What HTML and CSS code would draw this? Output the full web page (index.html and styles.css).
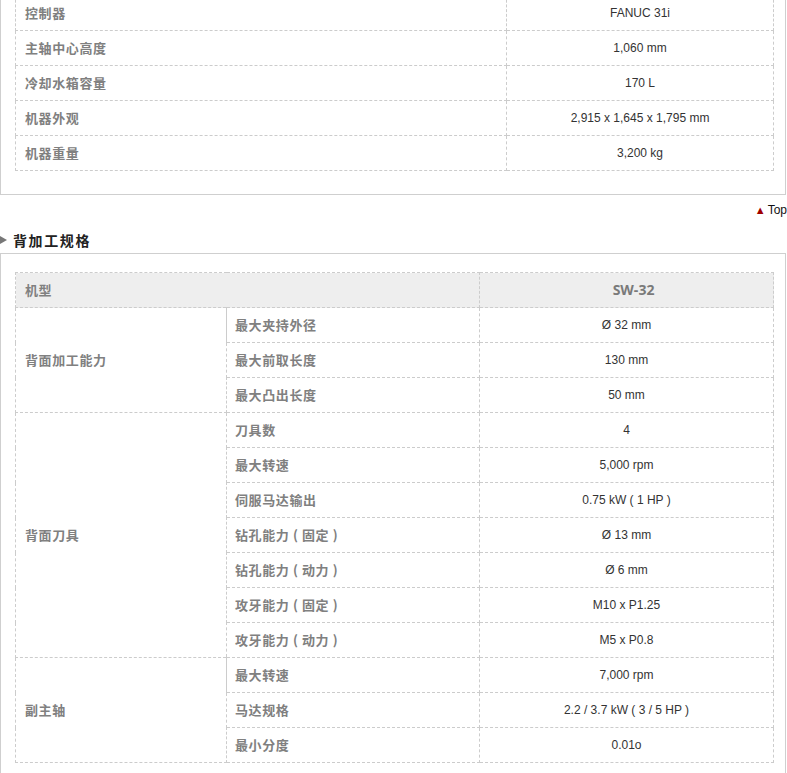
FILE: index.html
```html
<!DOCTYPE html>
<html lang="zh-CN">
<head>
<meta charset="utf-8">
<title>规格</title>
<link rel="stylesheet" href="styles.css">
</head>
<body>
<div class="box box-first">
  <table class="spec spec-a">
    <colgroup><col class="ca1"><col class="ca2"></colgroup>
    <tr><th>控制器</th><td>FANUC 31i</td></tr>
    <tr><th>主轴中心高度</th><td>1,060 mm</td></tr>
    <tr><th>冷却水箱容量</th><td>170 L</td></tr>
    <tr><th>机器外观</th><td>2,915 x 1,645 x 1,795 mm</td></tr>
    <tr><th>机器重量</th><td>3,200 kg</td></tr>
  </table>
</div>
<div class="top-link"><span class="tri-up">▲</span>Top</div>
<h2 class="section-title"><span class="tri-right"></span>背加工规格</h2>
<div class="box">
  <table class="spec spec-b">
    <colgroup><col class="cb1"><col class="cb2"><col class="cb3"></colgroup>
    <tr class="head"><th colspan="2">机型</th><td>SW-32</td></tr>
    <tr><th rowspan="3">背面加工能力</th><th class="item first">最大夹持外径</th><td>Ø 32 mm</td></tr>
    <tr><th class="item">最大前取长度</th><td>130 mm</td></tr>
    <tr><th class="item">最大凸出长度</th><td>50 mm</td></tr>
    <tr><th rowspan="7">背面刀具</th><th class="item">刀具数</th><td>4</td></tr>
    <tr><th class="item">最大转速</th><td>5,000 rpm</td></tr>
    <tr><th class="item">伺服马达输出</th><td>0.75 kW ( 1 HP )</td></tr>
    <tr><th class="item">钻孔能力 ( 固定 )</th><td>Ø 13 mm</td></tr>
    <tr><th class="item">钻孔能力 ( 动力 )</th><td>Ø 6 mm</td></tr>
    <tr><th class="item">攻牙能力 ( 固定 )</th><td>M10 x P1.25</td></tr>
    <tr><th class="item">攻牙能力 ( 动力 )</th><td>M5 x P0.8</td></tr>
    <tr><th rowspan="3">副主轴</th><th class="item first">最大转速</th><td>7,000 rpm</td></tr>
    <tr><th class="item">马达规格</th><td>2.2 / 3.7 kW ( 3 / 5 HP )</td></tr>
    <tr><th class="item">最小分度</th><td>0.01o</td></tr>
  </table>
</div>
</body>
</html>
```
FILE: styles.css
```css
html, body {
  margin: 0;
  padding: 0;
  background: #fff;
}
body {
  width: 787px;
  overflow: hidden;
  font-family: "Liberation Sans", Arial, "Noto Sans CJK SC", sans-serif;
  font-size: 12px;
  color: #333;
}
.box {
  width: 758px;
  border: 1px solid #cfcfcf;
  padding: 18px 12px 23px 14px;
}
.box-first {
  margin-top: -24px;
}
.spec {
  width: 758px;
  border-collapse: collapse;
  table-layout: fixed;
}
.ca1 { width: 491px; }
.ca2 { width: 267px; }
.cb1 { width: 211px; }
.cb2 { width: 253px; }
.cb3 { width: 294px; }
.spec th, .spec td {
  border: 1px dashed #cccccc;
  height: 35px;
  padding: 0;
  box-sizing: border-box;
}
.spec th {
  text-align: left;
  padding-left: 9px;
  padding-bottom: 2px;
  font-family: "Noto Sans CJK SC", "Liberation Sans", sans-serif;
  font-weight: bold;
  font-size: 13px;
  letter-spacing: 0.6px;
  color: #808080;
}
.spec td {
  text-align: center;
  padding-bottom: 1px;
  font-family: "Liberation Sans", Arial, sans-serif;
  font-size: 12px;
  color: #333;
}
.spec .head th, .spec .head td {
  background: #eeeeee;
}
.spec .head td {
  font-family: "Open Sans", "Liberation Sans", sans-serif;
  font-weight: bold;
  font-size: 14px;
  color: #7a7a7a;
  padding-left: 14px;
}
.spec th.item {
  padding-left: 8px;
}
.spec th.first {
  border-left: 1px solid #cccccc;
}
.top-link {
  text-align: right;
  margin-top: 7px;
  height: 16px;
  line-height: 16px;
  font-family: "Liberation Sans", Arial, sans-serif;
  font-size: 12px;
  color: #111;
}
.tri-up {
  color: #a00000;
  font-size: 11px;
  margin-right: 2px;
  vertical-align: 0;
}
.section-title {
  margin: 14px 0 5px 0;
  height: 16px;
  line-height: 16px;
  font-family: "Noto Sans CJK SC", sans-serif;
  font-weight: bold;
  font-size: 14px;
  letter-spacing: 1.6px;
  color: #222;
  display: flex;
  align-items: center;
}
.tri-right {
  width: 0;
  height: 0;
  border-left: 7px solid #777;
  border-top: 4px solid transparent;
  border-bottom: 4px solid transparent;
  margin-right: 6px;
}
```
